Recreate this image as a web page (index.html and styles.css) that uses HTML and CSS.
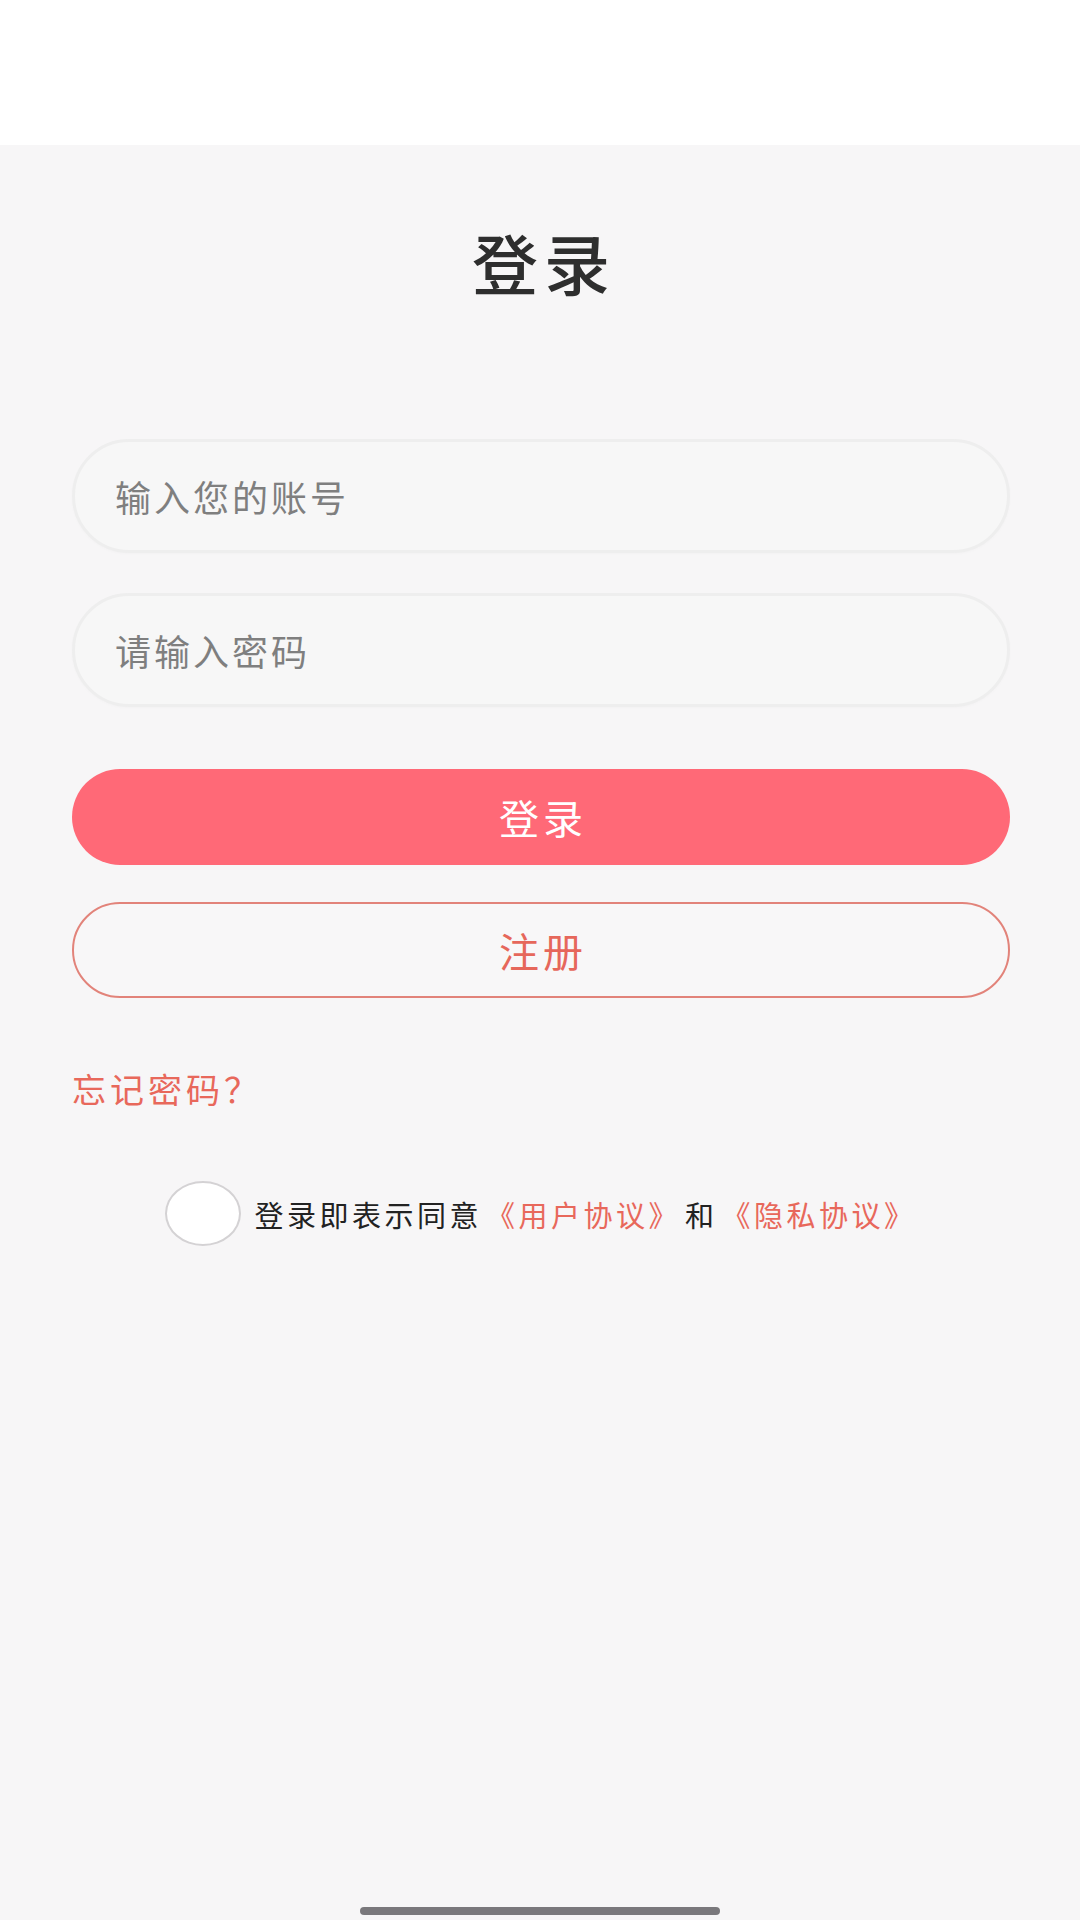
FILE: index.html
```html
<!DOCTYPE html>
<html lang="zh-CN">
<head>
    <meta charset="UTF-8">
    <meta name="viewport" content="width=device-width, initial-scale=1.0">
    <title>登录</title>
    <link rel="stylesheet" href="styles.css">
</head>
<body>
    <div class="page">
        <div class="status-bar"></div>

        <div class="login">
            <h1 class="title">登录</h1>

            <div class="form">
                <div class="field">
                    <input class="field-input" type="text" placeholder="输入您的账号">
                </div>
                <div class="field">
                    <input class="field-input" type="password" placeholder="请输入密码">
                </div>
            </div>

            <button class="btn btn-primary">登录</button>
            <button class="btn btn-outline">注册</button>

            <a class="forget" href="#">忘记密码？</a>

            <div class="agree">
                <span class="agree-check"></span>
                <span class="agree-text">登录即表示同意<a class="agree-link" href="#">《用户协议》</a>和<a class="agree-link" href="#">《隐私协议》</a></span>
            </div>
        </div>

        <div class="home-bar"></div>
    </div>
</body>
</html>
```

FILE: styles.css
```css
* {
    margin: 0;
    padding: 0;
    box-sizing: border-box;
}

body {
    font-family: "Noto Sans CJK SC", "Noto Sans", sans-serif;
    background: #f7f6f7;
    width: 1080px;
    height: 1920px;
    overflow: hidden;
}

.page {
    display: flex;
    flex-direction: column;
    height: 1920px;
}

.status-bar {
    height: 145px;
    background: #ffffff;
    flex-shrink: 0;
}

.login {
    flex: 1;
    display: flex;
    flex-direction: column;
    padding: 0 70px 0 72px;
}

.title {
    margin-top: 76px;
    height: 80px;
    line-height: 80px;
    text-align: center;
    font-size: 66px;
    font-weight: 500;
    letter-spacing: 6px;
    text-indent: 6px;
    color: #2e2e2e;
}

.form {
    display: flex;
    flex-direction: column;
    gap: 40px;
    margin-top: 138px;
}

.field {
    height: 114px;
    border: 3px solid #eeeeee;
    border-radius: 57px;
    background: #f7f7f7;
    box-shadow: 0 1px 3px rgba(0, 0, 0, 0.02);
    display: flex;
    align-items: center;
    padding: 0 40px;
}

.field-input {
    width: 100%;
    border: none;
    outline: none;
    background: transparent;
    font-family: inherit;
    font-size: 36px;
    letter-spacing: 3px;
    color: #333;
}

.field-input::placeholder {
    color: #7f7f7f;
}

.btn {
    height: 96px;
    border-radius: 48px;
    font-family: inherit;
    font-size: 40px;
    letter-spacing: 4px;
    text-indent: 4px;
    cursor: pointer;
}

.btn-primary {
    margin-top: 62px;
    border: none;
    background: #ff6977;
    color: #ffffff;
}

.btn-outline {
    margin-top: 37px;
    border: 2px solid #e2837a;
    background: #f8f7f8;
    color: #e6675b;
}

.forget {
    margin-top: 66px;
    align-self: flex-start;
    height: 50px;
    line-height: 50px;
    font-size: 34px;
    letter-spacing: 4px;
    color: #e8685b;
    text-decoration: none;
}

.agree {
    margin-top: 67px;
    display: flex;
    align-items: center;
    justify-content: center;
    gap: 13px;
    padding-left: 4px;
}

.agree-check {
    width: 76px;
    height: 65px;
    border-radius: 50%;
    border: 2px solid #d4d2d4;
    background: #ffffff;
    flex-shrink: 0;
}

.agree-text {
    font-size: 29px;
    letter-spacing: 3.5px;
    color: #222222;
    white-space: nowrap;
}

.agree-link {
    color: #e8685b;
    text-decoration: none;
    margin: 0 4px;
}

.home-bar {
    align-self: center;
    width: 360px;
    height: 8px;
    border-radius: 4px;
    background: #7a787c;
    margin-bottom: 5px;
    flex-shrink: 0;
}
```
